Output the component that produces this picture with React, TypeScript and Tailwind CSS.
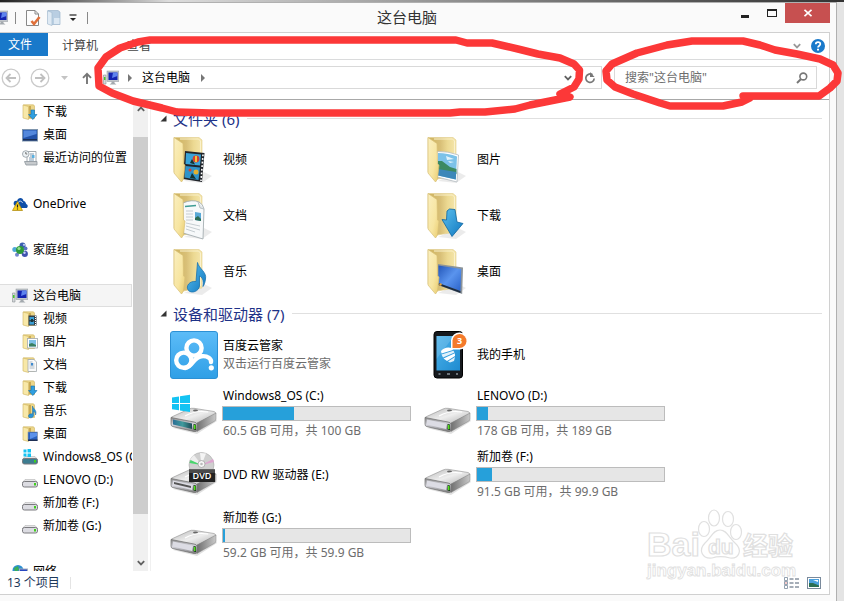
import React from "react";

type Kind = "video" | "picture" | "doc" | "download" | "music" | "desktop";

function FolderArt({ kind }: { kind: Kind }) {
  return (
    <svg viewBox="0 0 48 48" className="size-12 shrink-0" aria-hidden="true">
      <defs>
        <linearGradient id="fBack" x1="0" y1="0" x2="1" y2="0">
          <stop offset="0" stopColor="#cdb25c" />
          <stop offset="0.45" stopColor="#d9c078" />
          <stop offset="0.7" stopColor="#ecd992" />
          <stop offset="1" stopColor="#f5e6ac" />
        </linearGradient>
        <linearGradient id="fFront" x1="0" y1="0" x2="1" y2="1">
          <stop offset="0" stopColor="#faefc0" />
          <stop offset="0.6" stopColor="#f7e5a0" />
          <stop offset="1" stopColor="#e9cb6e" />
        </linearGradient>
        <linearGradient id="blueArt" x1="0" y1="0" x2="1" y2="1">
          <stop offset="0" stopColor="#5cc0ee" />
          <stop offset="1" stopColor="#0f77c0" />
        </linearGradient>
        <linearGradient id="screenArt" x1="0" y1="0" x2="1" y2="1">
          <stop offset="0" stopColor="#2356b8" />
          <stop offset="0.5" stopColor="#5a94ee" />
          <stop offset="1" stopColor="#2a62c8" />
        </linearGradient>
      </defs>
      <path d="M14 45 L34 36 L42 40 L32 47Z" fill="#000" opacity="0.08" />
      <path d="M4 1.5 L29 1.5 L32 4 V40 L13 43 L4 36Z" fill="url(#fBack)" stroke="#e0cc8c" strokeWidth="0.6" />
      <path d="M10 3 H28.5 L30.5 5 V38" fill="none" stroke="#faf1cb" strokeWidth="1" />
      {kind === "video" && (
        <g>
          <path d="M15 15 L34.5 17 L32 46 L13 43Z" fill="#20242a" />
          <path d="M16 17 L31 18.5 L30 29.5 L15.500 28Z" fill="#3aa5d8" />
          <path d="M15.500 30 L30 31.500 L28.500 44 L14.500 41.500Z" fill="#2f93c9" />
          <circle cx="26" cy="23" r="3.400" fill="#d7402f" />
          <path d="M25 20 h2 v6 h-2z" fill="#f3c337" />
          <path d="M20 27 L22 23 L25 28.500Z M20 42 L22 37 L26 43Z" fill="#16332f" />
          <circle cx="26" cy="36" r="2.500" fill="#e4b02f" />
          <circle cx="20" cy="34" r="1.500" fill="#d7402f" />
          <path d="M33 18.500 L31 45" stroke="#fff" strokeWidth="1.600" strokeDasharray="1.800 1.800" />
        </g>
      )}
      {kind === "doc" && (
        <g>
          <path d="M13 11 Q22 7 29 10 Q33 12 34 17 L33 47 L13 41Z" fill="#f7f9fa" stroke="#9aa4a8" strokeWidth="0.800" />
          <path d="M28 10 L30 16 L34 17" fill="#dfe5e8" stroke="#9aa4a8" strokeWidth="0.600" />
          <path d="M15 14.500 L26 13.500" stroke="#3f9c94" strokeWidth="1.400" />
          <path d="M16 19h7M16 22h7M16 25h7M16 28h7M16 31l14 3M16 34l14 4M16 37l9 3" stroke="#b9c1c7" strokeWidth="0.800" />
          <path d="M25 20 L31 21 V29 L25 28Z" fill="#5aa9d6" />
          <path d="M25 26 L28 24 L31 27 V29 L25 28Z" fill="#2d6d54" />
        </g>
      )}
      {kind === "picture" && (
        <g>
          <path d="M13 15.500 Q24 15 34.500 19 L33 46 L13 41Z" fill="#fff" stroke="#b3bbc0" strokeWidth="0.800" />
          <path d="M14 17 Q24 17 33 20.500 L31.800 43.500 L14 39.500Z" fill="#7cc2e8" />
          <path d="M14 25 L18 25 L26 31 L32.500 33 V38 L14 34Z" fill="#3c8a62" />
          <path d="M14 33 L32.200 36 L31.800 43.500 L14 39.500Z" fill="#3d88b9" />
          <path d="M22 20 L30 23 L23 24Z M24 25 L30 26 L26 27Z" fill="#e2f3fb" />
        </g>
      )}
      {kind === "download" && (
        <path d="M23 19 L25.500 17 L31 17.500 L33 30 L39 31.500 L28 44.500 L18 27.500 L22.500 28Z" fill="url(#blueArt)" stroke="#0d649f" strokeWidth="0.800" />
      )}
      {kind === "music" && (
        <path
          d="M27.500 14.500 C29 21 37 24 35.500 31 C35 35 34 37 33 38.500 C34 32 32 29 29.500 28 V38 C29 43 22 46 18.500 42.500 C15 38 20 32.500 26 33.500Z"
          fill="url(#blueArt)"
          stroke="#1a72ad"
          strokeWidth="0.800"
        />
      )}
      {kind === "desktop" && (
        <g>
          <path d="M14 16 L39 19.500 L38.200 46 L14 37Z" fill="#8b9399" />
          <path d="M14.500 17.500 L37.200 21 L36.500 43 L14.500 35.500Z" fill="url(#screenArt)" />
          <path d="M14.500 35 L36.500 43 V45 L14.500 37Z" fill="#1c2d42" />
          <circle cx="16.500" cy="36.500" r="1.200" fill="#e9a635" />
        </g>
      )}
      <path d="M4 1.500 L13 7.500 L13.500 28 L15 29 L13.500 43 L11.500 46 L4 37Z" fill="url(#fFront)" stroke="#d9c077" strokeWidth="0.700" />
    </svg>
  );
}

function DriveArt({ variant = "plain" }: { variant?: "plain" | "windows" | "dvd" }) {
  return (
    <svg viewBox="0 0 48 48" className="size-12 shrink-0" aria-hidden="true">
      <defs>
        <linearGradient id="dTop" x1="0" y1="0" x2="1" y2="1">
          <stop offset="0" stopColor="#b8b8b8" />
          <stop offset="0.5" stopColor="#eeeeee" />
          <stop offset="1" stopColor="#b0b0b0" />
        </linearGradient>
        <linearGradient id="dFront" x1="0" y1="0" x2="0" y2="1">
          <stop offset="0" stopColor="#8c8c8c" />
          <stop offset="0.500" stopColor="#d6d6de" />
          <stop offset="1" stopColor="#777" />
        </linearGradient>
        <linearGradient id="dTeal" x1="0" y1="0" x2="1" y2="0">
          <stop offset="0" stopColor="#2b6f96" />
          <stop offset="0.500" stopColor="#3f9a9c" />
          <stop offset="1" stopColor="#1f4a56" />
        </linearGradient>
        <linearGradient id="dSide" x1="0" y1="0" x2="1" y2="0">
          <stop offset="0" stopColor="#707070" />
          <stop offset="1" stopColor="#c9c9c9" />
        </linearGradient>
      </defs>
      <path d="M3 38 L27 44 L47 31 L45 28Z" fill="#000" opacity="0.12" />
      <path d="M1.500 27 L19 19 Q21 18 24 18.300 L44 21.500 Q46.500 22.500 45.500 24 L28 33 Q26 34 23 33.500 L2.500 29Z" fill="url(#dTop)" stroke="#8f8f8f" strokeWidth="0.600" />
      <path d="M1 27.500 L24 32 Q26.500 32.500 27 34 V40 Q27 42 24 41.500 L2.500 36.500 Q1 36 1 34Z" fill="url(#dFront)" stroke="#6b6b6b" strokeWidth="0.700" />
      <path d="M27 33 L46 23 V29 Q46 30.500 44 31.500 L27 41.500Z" fill="url(#dSide)" stroke="#808080" strokeWidth="0.500" />
      <path d="M3 29.500 L22 33.500 V39 L3 34.500Z" fill={variant === "windows" ? "url(#dTeal)" : "#dcdce4"} />
      {variant === "dvd" && <path d="M4 31 L21 35 V37 L4 33Z" fill="#555" />}
      <ellipse cx="25.500" cy="20.500" rx="2.500" ry="1" fill="#666" />
      <path d="M15 26 Q26 20 38 22" fill="none" stroke="#fff" strokeWidth="1.200" />
      <path d="M23.500 34 L26 34.500 V40 L23.500 39.500Z" fill="#123a10" />
      <path d="M24 35 h1.500 v4 h-1.500z" fill="#55e01e" />
      {variant === "windows" && (
        <path d="M2 7.500 L9 6.500 V13 H2Z M10 6.300 L20 4.800 V13 H10Z M2 14 H9 V20.300 L2 19.300Z M10 14 H20 V22 L10 20.500Z" fill="#14c3f3" />
      )}
      {variant === "dvd" && (
        <g>
          <circle cx="31.500" cy="14" r="12.500" fill="#cfcfcf" stroke="#aaa" strokeWidth="0.600" />
          <path d="M31.500 14 L20 9 A12.500 12.500 0 0 1 24 4Z" fill="#eee" />
          <path d="M31.500 14 L19.500 12 L20.500 9Z" fill="#49d66d" />
          <path d="M31.500 14 L43 8 L44 11Z" fill="#dda5cf" />
          <path d="M31.500 14 L30 2 L36 2.500Z" fill="#f4f4f4" />
          <circle cx="31.500" cy="13" r="3.500" fill="#f6f6f6" stroke="#999" strokeWidth="0.700" />
          <circle cx="31.500" cy="13" r="1.300" fill="#bbb" />
          <path d="M19 18.500 H45 V31 H19Z" fill="#222" />
          <path d="M19 18.500 H45 V22 H19Z" fill="#4a4a4a" />
          <text x="32" y="28" textAnchor="middle" fontSize="9" fontWeight="600" fontFamily="Open Sans, sans-serif" fill="#fff">DVD</text>
        </g>
      )}
    </svg>
  );
}

function CloudArt() {
  return (
    <svg viewBox="0 0 48 48" className="size-12 shrink-0" aria-hidden="true">
      <defs>
        <linearGradient id="cloudBg" x1="0" y1="0" x2="0" y2="1">
          <stop offset="0" stopColor="#5cbcf8" />
          <stop offset="1" stopColor="#2f9fe6" />
        </linearGradient>
      </defs>
      <rect x="0.500" y="0.500" width="47" height="47" rx="2.500" fill="url(#cloudBg)" stroke="#2c90d4" />
      <g fill="none" stroke="#fff" strokeWidth="4.400">
        <circle cx="24" cy="17" r="7.600" />
        <circle cx="13.800" cy="29.200" r="7.600" />
        <path d="M15 37 C23 36 23 26 31.500 25.200 C38 24.500 41.500 28 41 31" strokeLinecap="round" />
      </g>
      <circle cx="41.300" cy="36.800" r="2.600" fill="#fff" />
    </svg>
  );
}

function PhoneArt() {
  return (
    <svg viewBox="0 0 48 48" className="size-12 shrink-0" aria-hidden="true">
      <defs>
        <linearGradient id="phoneScreen" x1="0" y1="0" x2="1" y2="1">
          <stop offset="0" stopColor="#4bb2ea" />
          <stop offset="1" stopColor="#1f8bd0" />
        </linearGradient>
      </defs>
      <rect x="10" y="0.500" width="28.500" height="46.500" rx="3" fill="#16191d" stroke="#000" />
      <rect x="12.500" y="5" width="23.500" height="34.500" fill="url(#phoneScreen)" />
      <path d="M12.500 5 H30 L12.500 28Z" fill="#fff" opacity="0.150" />
      <g fill="#fff">
        <path d="M17 20 Q21 15 28 17 L29 19 L17.500 22.500Z" />
        <path d="M17.500 23.500 L29.500 19.800 L30.500 21.500 L19 26.500Z" opacity="0.850" />
        <path d="M19.500 27.500 L30.800 22.300 L31 25 L23 30Z" />
        <path d="M24 30.500 L31 26 L30 30 L26 31.500Z" opacity="0.850" />
      </g>
      <path d="M14.500 43h2M23 43h3M32 43h2" stroke="#8b9299" strokeWidth="1.500" />
      <path d="M27 18.500 V9 A8.500 8.500 0 1 1 36 18.500Z" fill="#fff" />
      <path d="M28.500 17 V9.500 A7 7 0 1 1 35.500 17Z" fill="#f47a2b" />
      <text x="35.500" y="13" textAnchor="middle" fontSize="9" fontWeight="700" fontFamily="Open Sans, sans-serif" fill="#fff">3</text>
    </svg>
  );
}

function PcIcon() {
  return (
    <svg viewBox="0 0 16 16" className="size-4 shrink-0" aria-hidden="true">
      <path d="M0.500 5 h2.500 v9 h-2.500z" fill="#d5d8da" stroke="#8a9094" strokeWidth="0.600" />
      <path d="M1 7h1.500v3h-1.500z" fill="#45c52c" />
      <rect x="4" y="1" width="12" height="10.500" fill="#c2c7cc" stroke="#8f969c" strokeWidth="0.500" />
      <rect x="5.500" y="2.500" width="9" height="7.500" fill="#1323b0" />
      <path d="M10 2.500 h4.500 v3.500 L9 8Z" fill="#5d83ee" />
      <path d="M8.500 11.500 h3 v1.500 l2 1.500 h-7 l2 -1.500z" fill="#a3a9ae" />
    </svg>
  );
}

function SmallFolder({ kind }: { kind: Kind }) {
  return (
    <svg viewBox="0 0 16 16" className="size-4 shrink-0" aria-hidden="true">
      <path d="M1.500 0.800 H11.500 L12.500 2 V14.500 H4Z" fill="#ecd68a" stroke="#cfb360" strokeWidth="0.600" />
      <path d="M7 2 h2 v12 h-2z" fill="#c9aa55" />
      <path d="M1 1 L6.500 2.500 V15.500 L1 14Z" fill="#f8e8a8" stroke="#cfb360" strokeWidth="0.600" />
      {kind === "video" && (
        <g>
          <rect x="6.500" y="4.500" width="8" height="10" fill="#34404a" />
          <path d="M7.500 6h4.500v3H7.500zM7.500 10.500h4.500v3H7.500z" fill="#3a9fd4" />
          <path d="M13.500 5v9" stroke="#fff" strokeDasharray="1 1" />
          <path d="M9 8h2v3H9z" fill="#18373c" />
        </g>
      )}
      {kind === "picture" && (
        <g>
          <rect x="5.500" y="4.500" width="10" height="9.500" fill="#fff" stroke="#a2a9ae" strokeWidth="0.800" />
          <rect x="7" y="6" width="7" height="6.500" fill="#7fc0e6" />
          <path d="M7 10 L10 9 L14 11 V12.500 H7Z" fill="#3a8060" />
        </g>
      )}
      {kind === "doc" && (
        <g>
          <path d="M6 2.500 H12 L14.500 5 V14.500 H6Z" fill="#fafafa" stroke="#a2a9ae" strokeWidth="0.800" />
          <path d="M7.500 5h3M7.500 7h5M7.500 9h5M7.500 11h5" stroke="#99a8b5" strokeWidth="0.800" />
          <rect x="9" y="6" width="2" height="2.500" fill="#3c8ad0" />
        </g>
      )}
      {kind === "download" && (
        <path d="M9 6 H12.500 V10.500 H15 L10.800 15.500 L6.500 10.500 H9Z" fill="#2f9fe0" stroke="#1070b0" strokeWidth="0.600" />
      )}
      {kind === "music" && (
        <path d="M10.500 3 C11 6 15.500 7 13.500 12 C13.500 9 12.500 9 11.500 8.500 V12.500 C11.500 15 6.500 16 6.500 13 C6.500 11 9 10.500 10.500 11Z" fill="#2b93d6" stroke="#1a6ea8" strokeWidth="0.500" />
      )}
      {kind === "desktop" && (
        <g>
          <rect x="6" y="6" width="9.500" height="8.500" fill="#2a62c0" stroke="#8b959f" strokeWidth="0.600" />
          <path d="M8 7h7v3L8 13z" fill="#5c92ea" />
          <path d="M6 13.500h9.500v1.500H6z" fill="#1c2d52" />
        </g>
      )}
    </svg>
  );
}

function SmallDrive({ windows = false }: { windows?: boolean }) {
  return (
    <svg viewBox="0 0 16 16" className="size-4 shrink-0" aria-hidden="true">
      <path d="M3 7.500 H13 L15.500 10.500 H0.500Z" fill="#e5e5e7" stroke="#aaa" strokeWidth="0.500" />
      <rect x="0.500" y="9.500" width="15" height="5.500" rx="1.800" fill={windows ? "#3d7d91" : "#dcdce2"} stroke="#7b7b7f" />
      <path d="M12 11h2v2.500h-2z" fill="#3fce1d" />
      {windows && <path d="M1.500 0.500h3v3h-3zM5.500 0h3.500v3.500h-3.500zM1.500 4.500h3v3h-3zM5.500 4.500h3.500V8h-3.500z" fill="#14c3f3" />}
    </svg>
  );
}

function ScreenIcon() {
  return (
    <svg viewBox="0 0 16 16" className="size-4 shrink-0" aria-hidden="true">
      <rect x="0.500" y="2.500" width="15" height="11.500" fill="#2352a8" stroke="#7f95ad" />
      <path d="M1.500 3.500 H14.500 V7 L1.500 11Z" fill="#5488dc" />
      <path d="M1 12h14v1.500H1z" fill="#1a2f55" />
    </svg>
  );
}

function RecentIcon() {
  return (
    <svg viewBox="0 0 16 16" className="size-4 shrink-0" aria-hidden="true">
      <path d="M5 1.500 H14 V12 H5Z" fill="#fff" stroke="#8d969c" strokeWidth="0.800" />
      <path d="M8 4h4M8 6h2M7 8h5M7 10h5" stroke="#7d98b0" />
      <path d="M10 5h2.500v3H10z" fill="#5ab0e0" />
      <path d="M2.500 11.500 H15 V15 H4 Z" fill="#c6cacd" stroke="#8d969c" strokeWidth="0.800" />
      <circle cx="3.800" cy="4" r="3.300" fill="#eef3f6" stroke="#8e989f" strokeWidth="0.800" />
      <path d="M3.800 2v2h1.500" fill="none" stroke="#555" strokeWidth="0.800" />
    </svg>
  );
}

function OneDriveIcon() {
  return (
    <svg viewBox="0 0 16 16" className="size-4 shrink-0" aria-hidden="true">
      <path d="M2 9 C0.500 5 4 4 5 5 C6 1 11 1 11.500 5 C14 5 13.500 8 15 8.500 C16.500 9.500 15.500 12 14 12 H6Z" fill="#0f4fa8" />
      <path d="M6 7 C7 4 10 5 10.500 7" fill="none" stroke="#fff" strokeWidth="0.800" />
      <path d="M5.500 5.500 L10.500 14.500 H0.500Z" fill="#fbd21c" stroke="#a98407" strokeWidth="0.700" />
      <path d="M5.500 8.500v3M5.500 12.500v1" stroke="#222" strokeWidth="1.200" />
    </svg>
  );
}

function HomegroupIcon() {
  return (
    <svg viewBox="0 0 16 16" className="size-4 shrink-0" aria-hidden="true">
      <circle cx="2.800" cy="7.500" r="2.500" fill="#4fa9d6" />
      <circle cx="10.500" cy="3.500" r="3" fill="#3c5fb0" />
      <circle cx="12.800" cy="11.800" r="3.100" fill="#4053b0" />
      <circle cx="5" cy="12.800" r="2" fill="#7186cc" />
      <circle cx="13.500" cy="6.500" r="2" fill="#5a73c4" />
      <circle cx="8" cy="8" r="4" fill="#2c9a3c" />
      <circle cx="7" cy="6.500" r="1.600" fill="#98e08d" />
      <circle cx="12" cy="2.800" r="1.100" fill="#b9cdf4" />
      <circle cx="12.500" cy="10.800" r="1.200" fill="#c5cff6" />
    </svg>
  );
}

function NetworkIcon() {
  return (
    <svg viewBox="0 0 16 16" className="size-4 shrink-0" aria-hidden="true">
      <circle cx="6" cy="6.500" r="5.500" fill="#2d8fd2" />
      <path d="M2 4 L6 2 L7 6 L3 8Z M7 8 L10 9 L8 12Z" fill="#3cb057" />
      <rect x="7.500" y="5" width="8" height="7" fill="#2746c0" stroke="#a6b0bd" />
    </svg>
  );
}

type NavRow = { label: string; icon: React.ReactNode; top?: boolean; selected?: boolean } | null;

const navRows: NavRow[] = [
  { label: "下载", icon: <SmallFolder kind="download" /> },
  { label: "桌面", icon: <ScreenIcon /> },
  { label: "最近访问的位置", icon: <RecentIcon /> },
  null,
  { label: "OneDrive", icon: <OneDriveIcon />, top: true },
  null,
  { label: "家庭组", icon: <HomegroupIcon />, top: true },
  null,
  { label: "这台电脑", icon: <PcIcon />, top: true, selected: true },
  { label: "视频", icon: <SmallFolder kind="video" /> },
  { label: "图片", icon: <SmallFolder kind="picture" /> },
  { label: "文档", icon: <SmallFolder kind="doc" /> },
  { label: "下载", icon: <SmallFolder kind="download" /> },
  { label: "音乐", icon: <SmallFolder kind="music" /> },
  { label: "桌面", icon: <SmallFolder kind="desktop" /> },
  { label: "Windows8_OS (C:)", icon: <SmallDrive windows /> },
  { label: "LENOVO (D:)", icon: <SmallDrive /> },
  { label: "新加卷 (F:)", icon: <SmallDrive /> },
  { label: "新加卷 (G:)", icon: <SmallDrive /> },
  null,
  { label: "网络", icon: <NetworkIcon />, top: true },
];

const folders: { label: string; kind: Kind }[] = [
  { label: "视频", kind: "video" },
  { label: "图片", kind: "picture" },
  { label: "文档", kind: "doc" },
  { label: "下载", kind: "download" },
  { label: "音乐", kind: "music" },
  { label: "桌面", kind: "desktop" },
];

function GroupHeader({ title }: { title: string }) {
  return (
    <h2 className="flex h-[27px] items-center pr-[7px] pl-[9px]">
      <button className="flex items-center gap-[6px] text-[15px] leading-5 whitespace-nowrap text-[#1e3287]">
        <svg viewBox="0 0 7 7" className="size-[7px]" aria-hidden="true">
          <path d="M6.500 0.500 V6.500 H0.500Z" fill="#333" />
        </svg>
        {title}
      </button>
      <span className="ml-2 h-px flex-1 bg-[#e0e0e0]" />
    </h2>
  );
}

function Entry({ icon, label, detail }: { icon: React.ReactNode; label: string; detail?: string }) {
  return (
    <button className="flex h-full min-h-14 items-center gap-[5px] text-left">
      {icon}
      <span className="flex flex-col leading-[18px]">
        <span>{label}</span>
        {detail && <span className="text-[#6d6d6d]">{detail}</span>}
      </span>
    </button>
  );
}

function Drive({ label, used, detail, windows = false }: { label: string; used: number; detail: string; windows?: boolean }) {
  return (
    <button className="flex h-[61px] items-center gap-1 text-left">
      <DriveArt variant={windows ? "windows" : "plain"} />
      <span className="flex w-[189px] flex-col gap-px leading-[18px]">
        <span className="pl-px">{label}</span>
        <span className="flex h-[15px] border border-[#bcbcbc] bg-[#e6e6e6]">
          <span className="block h-full bg-[#26a0da]" style={{ width: `${used}%` }} />
        </span>
        <span className="pl-px whitespace-nowrap text-[#6d6d6d]">{detail}</span>
      </span>
    </button>
  );
}

function Chevron({ up = false, color = "#606060" }: { up?: boolean; color?: string }) {
  return (
    <svg viewBox="0 0 8 8" className="size-2 shrink-0" aria-hidden="true">
      <path d={up ? "M0.800 5.800 L4 2.600 L7.200 5.800" : "M0.800 2.200 L4 5.400 L7.200 2.200"} fill="none" stroke={color} strokeWidth="1.800" />
    </svg>
  );
}

function CrumbArrow() {
  return (
    <svg viewBox="0 0 4 8" className="h-2 w-1 shrink-0" aria-hidden="true">
      <path d="M0 0 L4 4 L0 8Z" fill="#777" />
    </svg>
  );
}

function TitleBar() {
  return (
    <header className="flex h-[29px] shrink-0 items-start">
      <div className="flex h-[29px] flex-1 items-center overflow-hidden">
        <div className="-ml-2">
          <PcIcon />
        </div>
        <span className="ml-[7px] h-3 w-px bg-[#888]" />
        <button aria-label="属性" className="ml-[9px]">
          <svg viewBox="0 0 16 18" className="h-[18px] w-4" aria-hidden="true">
            <path d="M1.500 1.500 H10 L13.500 5 V16.500 H1.500Z" fill="#fdfdfd" stroke="#888" />
            <path d="M10 1.500 V5 H13.500" fill="none" stroke="#888" />
            <path d="M6.500 12 L9 15 L14.500 8" fill="none" stroke="#e0703a" strokeWidth="2.600" />
          </svg>
        </button>
        <button aria-label="新建文件夹" className="ml-[6px]">
          <svg viewBox="0 0 14 16" className="h-4 w-3.5" aria-hidden="true">
            <path d="M1 0.500 H11 L13 2 V14.500 H3Z" fill="#b9cee2" stroke="#9cb4cb" strokeWidth="0.700" />
            <path d="M0.500 0.800 L5 2.500 V15.500 L0.500 14Z" fill="#dfeaf4" stroke="#a5bbd0" strokeWidth="0.700" />
            <path d="M7 8h5.500v6H7z" fill="#dce8f3" />
          </svg>
        </button>
        <button aria-label="自定义快速访问工具栏" className="ml-2">
          <svg viewBox="0 0 8 8" className="size-2" aria-hidden="true">
            <path d="M0.500 1h7" stroke="#222" strokeWidth="1.200" />
            <path d="M1 4 H7 L4 7Z" fill="#222" />
          </svg>
        </button>
        <span className="ml-2.5 h-3 w-px bg-[#888]" />
      </div>
      <h1 className="mr-4 pt-1 text-[15px] leading-5 text-[#333]">这台电脑</h1>
      <div className="flex flex-1 justify-end">
        <button aria-label="最小化" className="flex h-5 w-[27px] items-center justify-center">
          <span className="mt-1.5 h-[3px] w-2 bg-[#222]" />
        </button>
        <button aria-label="最大化" className="flex h-5 w-[27px] items-center justify-center">
          <span className="h-2 w-2.5 border border-t-2 border-[#222]" />
        </button>
        <button aria-label="关闭" className="flex h-5 w-[45px] items-center justify-center bg-[#c75050]">
          <svg viewBox="0 0 8 8" className="size-2" aria-hidden="true">
            <path d="M0.500 0.800 L7.500 7.200 M7.500 0.800 L0.500 7.200" stroke="#fff" strokeWidth="1.700" />
          </svg>
        </button>
      </div>
    </header>
  );
}

function RibbonTabs() {
  return (
    <div className="flex h-[27px] shrink-0 items-start border-b border-[#dadbdc] text-[#444]">
      <button className="h-[23px] w-12 bg-[#1979ca] pr-2 leading-[23px] text-white">文件</button>
      <button className="ml-3.5 leading-[26px]">计算机</button>
      <button className="ml-[29px] leading-[26px]">查看</button>
      <div className="ml-auto flex h-[26px] items-center gap-2.5 pr-1">
        <button aria-label="展开功能区">
          <Chevron color="#999" />
        </button>
        <button aria-label="帮助">
          <svg viewBox="0 0 14 14" className="size-3.5" aria-hidden="true">
            <circle cx="7" cy="7" r="7" fill="#1979ca" />
            <path d="M4.800 5.200 C4.800 2.500 9.300 2.600 9.300 5.100 C9.300 6.700 7 6.800 7 8.600" fill="none" stroke="#fff" strokeWidth="1.700" />
            <path d="M6 9.800h2v1.800H6z" fill="#fff" />
          </svg>
        </button>
      </div>
    </div>
  );
}

function AddressRow() {
  return (
    <div className="flex h-[40px] shrink-0 items-center border-b border-[#a8a8a8] pr-3 pb-1">
      <button aria-label="后退" className="ml-px">
        <svg viewBox="0 0 20 20" className="size-5" aria-hidden="true">
          <circle cx="10" cy="10" r="8.800" fill="none" stroke="#cacaca" strokeWidth="1.300" />
          <path d="M15 10 H6 M9.500 6 L5.500 10 L9.500 14" fill="none" stroke="#c0c0c0" strokeWidth="1.800" />
        </svg>
      </button>
      <button aria-label="前进" className="ml-[9px]">
        <svg viewBox="0 0 20 20" className="size-5" aria-hidden="true">
          <circle cx="10" cy="10" r="8.800" fill="none" stroke="#cacaca" strokeWidth="1.300" />
          <path d="M5 10 H14 M10.500 6 L14.500 10 L10.500 14" fill="none" stroke="#c0c0c0" strokeWidth="1.800" />
        </svg>
      </button>
      <button aria-label="最近浏览的位置" className="ml-[11px]">
        <svg viewBox="0 0 7 4" className="h-1 w-[7px]" aria-hidden="true">
          <path d="M0 0 H7 L3.500 4Z" fill="#c4c4c4" />
        </svg>
      </button>
      <button aria-label="上移" className="ml-[14px]">
        <svg viewBox="0 0 10 12" className="h-3 w-2.5" aria-hidden="true">
          <path d="M5 12 V1.500 M1 5.800 L5 1.800 L9 5.800" fill="none" stroke="#777" strokeWidth="1.900" />
        </svg>
      </button>
      <div className="ml-2 flex h-[23px] flex-1 items-center border border-[#d9d9d9] bg-white pr-[5px] pl-[2px]">
        <PcIcon />
        <span className="ml-[9px]">
          <CrumbArrow />
        </span>
        <button className="ml-2.5 text-black">这台电脑</button>
        <span className="ml-[11px]">
          <CrumbArrow />
        </span>
        <button aria-label="以前的位置" className="ml-auto">
          <Chevron />
        </button>
        <button aria-label="刷新" className="ml-3">
          <svg viewBox="0 0 12 12" className="size-3" aria-hidden="true">
            <path d="M8.500 2.800 A4.200 4.200 0 1 0 10.200 6.500" fill="none" stroke="#777" strokeWidth="1.700" />
            <path d="M6 0 V5 H10.500Z" fill="#777" />
          </svg>
        </button>
      </div>
      <div className="ml-3 flex h-[23px] w-[203px] items-center border border-[#d9d9d9] bg-white pr-2 pl-2.5">
        <input
          type="search"
          aria-label="搜索这台电脑"
          placeholder={'搜索"这台电脑"'}
          className="min-w-0 flex-1 bg-transparent leading-[18px] outline-none placeholder:text-[#6d6d6d]"
        />
        <button aria-label="搜索">
          <svg viewBox="0 0 12 12" className="size-3" aria-hidden="true">
            <circle cx="7.300" cy="4.500" r="3.400" fill="none" stroke="#777" strokeWidth="1.600" />
            <path d="M5 7 L1 11" stroke="#777" strokeWidth="2" />
          </svg>
        </button>
      </div>
    </div>
  );
}

function Sidebar() {
  return (
    <aside className="flex w-[151px] shrink-0 border-r border-[#f0f0f0]">
      <nav className="flex w-[133px] flex-col overflow-hidden pr-px">
        {navRows.map((row, i) =>
          row ? (
            <a
              key={i}
              href={`#${i}`}
              className={
                "flex h-[23px] shrink-0 items-center gap-[5px] overflow-hidden whitespace-nowrap " +
                (row.top ? "pl-3 " : "pl-[22px] ") +
                (row.selected ? "border-y border-r border-[#dedede] bg-[#f5f5f5]" : "")
              }
            >
              {row.icon}
              <span>{row.label}</span>
            </a>
          ) : (
            <div key={i} className="h-[23px] shrink-0" />
          ),
        )}
      </nav>
      <div className="flex w-[15px] flex-col items-center bg-[#f0f0f0]">
        <button aria-label="向上滚动" className="flex h-[37px] w-full justify-center pt-[5px]">
          <Chevron up />
        </button>
        <div className="w-full flex-[377] bg-[#cdcdcd]" />
        <div className="flex-[40]" />
        <button aria-label="向下滚动" className="flex h-[17px] w-full items-center justify-center">
          <Chevron />
        </button>
      </div>
    </aside>
  );
}

function StatusBar() {
  return (
    <footer className="flex h-[23px] shrink-0 items-center pr-2 pl-[7px] text-[#1e395b]">
      <span>13 个项目</span>
      <span className="ml-2.5 h-3 w-px bg-[#e4e4e4]" />
      <button aria-label="详细信息" className="ml-auto">
        <svg viewBox="0 0 16 12" className="h-3 w-4" aria-hidden="true">
          <path d="M0.500 0.500h3v3h-3zM0.500 4.500h3v3h-3zM0.500 8.500h3v3h-3z" fill="#fff" stroke="#7a8a9c" strokeWidth="0.800" />
          <path d="M1.500 5.500h1v1h-1z" fill="#d33" />
          <path d="M5.500 2h4M11 2h4M5.500 6h4M11 6h4M5.500 10h4M11 10h4" stroke="#4d5d70" />
        </svg>
      </button>
      <button aria-label="大图标" className="ml-[7px]">
        <svg viewBox="0 0 14 12" className="h-3 w-3.5" aria-hidden="true">
          <rect x="0.500" y="0.500" width="13" height="11" fill="#fff" stroke="#7a8a9c" />
          <path d="M2 2h10v8H2z" fill="#4aa0dd" />
          <path d="M2 6 L6 6 L12 8.500 V10 H2Z" fill="#2b6f54" />
          <path d="M6 3h5v2z" fill="#fff" />
        </svg>
      </button>
    </footer>
  );
}

function Watermark() {
  return (
    <svg viewBox="0 0 156 76" className="pointer-events-none absolute right-[30px] bottom-3 h-[76px] w-[156px]" aria-hidden="true">
      <g fill="#fff" stroke="#e0e0e0" strokeWidth="1.200" fontFamily="Liberation Sans, Noto Sans CJK SC, sans-serif" fontWeight="700">
        <text x="4" y="50" fontSize="34">Bai</text>
        <ellipse cx="61" cy="23" rx="5.500" ry="7.500" />
        <ellipse cx="71" cy="12" rx="5.500" ry="8" />
        <ellipse cx="85" cy="13" rx="5.500" ry="7.500" />
        <ellipse cx="93" cy="26" rx="5.500" ry="7.500" />
        <path d="M77 24 C84 24 86 32 92 37 C100 44 96 53 87 52 C80 50 75 50 69 52 C59 53 55 44 62 37 C68 32 70 24 77 24Z" />
        <text x="65" y="48" fontSize="21">du</text>
        <text x="100" y="49" fontSize="25">经验</text>
        <text x="4" y="70" fontSize="17" strokeWidth="0.800">jingyan.baidu.com</text>
      </g>
    </svg>
  );
}

function MarkerLoops() {
  return (
    <svg viewBox="0 0 844 601" preserveAspectRatio="none" className="pointer-events-none absolute inset-0 size-full" aria-hidden="true">
      <g fill="none" stroke="#fc3838" strokeWidth="7.500" strokeLinecap="round" strokeLinejoin="round">
        <path d="M150 40 H456 L467 43 H492 L505 46 L520 49.500 L538 54 L560 58 L574 64 L579.500 70 L579 79 L574 87 L560 94 L570 97 L530 105 L515 109 L485 112 L460 112 L450 113 H210 L177 112 L162 108 L133 101 L112 93 L99 86 L98 68 L106 57 L120 48 L138 42Z" />
        <path d="M692 41 H743 L760 45 L775 50 L797 54 L820 59 L833 65 L838 73 L837 81 L830 88 L819 96 H743 L750 98 L742 102 L723 106 H670 L660 103 L633 94 L615 87 L607 80 L606 71 L612 64 L637 53 L667 45Z" />
      </g>
    </svg>
  );
}

export default function App() {
  return (
    <div className="relative flex h-screen flex-col overflow-hidden bg-[#e4e4e4] font-['Noto_Sans','Noto_Sans_CJK_SC',sans-serif] text-[12px] leading-[18px] text-black">
      <div className="h-[2px] shrink-0 bg-linear-to-r from-[#222] via-[#ddd] via-20% to-[#333]" />
      <div className="flex min-h-0 flex-1 pr-[7px]">
        <div className="flex min-w-0 flex-1 flex-col border-t border-r border-[#b0b0b0] bg-[#fafafa] pr-[6px] pb-1.5">
          <TitleBar />
          <main className="relative flex min-h-0 flex-1 flex-col border-y border-r border-[#d0d0d0] bg-white">
            <RibbonTabs />
            <AddressRow />
            <div className="flex min-h-0 flex-1">
              <Sidebar />
              <div className="min-w-0 flex-1 overflow-hidden pt-[5px]">
                <section>
                  <GroupHeader title="文件夹 (6)" />
                  <div className="grid grid-cols-[repeat(auto-fill,254px)] pl-[19px]">
                    {folders.map((f) => (
                      <Entry key={f.label} icon={<FolderArt kind={f.kind} />} label={f.label} />
                    ))}
                  </div>
                </section>
                <section>
                  <GroupHeader title="设备和驱动器 (7)" />
                  <div className="grid grid-cols-[repeat(auto-fill,254px)] pl-[19px]">
                    <Entry icon={<CloudArt />} label="百度云管家" detail="双击运行百度云管家" />
                    <Entry icon={<PhoneArt />} label="我的手机" />
                    <Drive windows label="Windows8_OS (C:)" used={38} detail="60.5 GB 可用，共 100 GB" />
                    <Drive label="LENOVO (D:)" used={6} detail="178 GB 可用，共 189 GB" />
                    <Entry icon={<DriveArt variant="dvd" />} label="DVD RW 驱动器 (E:)" />
                    <Drive label="新加卷 (F:)" used={8} detail="91.5 GB 可用，共 99.9 GB" />
                    <Drive label="新加卷 (G:)" used={1} detail="59.2 GB 可用，共 59.9 GB" />
                  </div>
                </section>
              </div>
            </div>
            <StatusBar />
            <Watermark />
          </main>
        </div>
      </div>
      <MarkerLoops />
    </div>
  );
}
